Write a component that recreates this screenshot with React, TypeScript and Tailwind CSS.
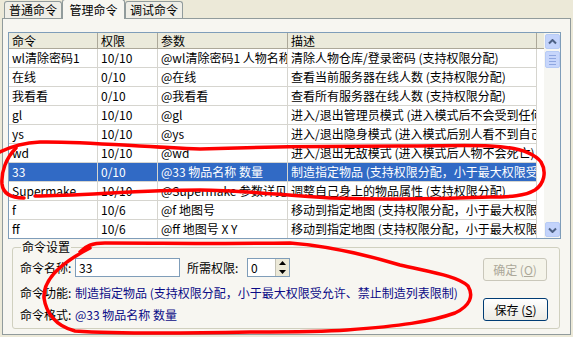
import { ReactNode } from "react";

interface Row {
  name: string;
  level: string;
  args: string;
  desc: string;
  selected?: boolean;
}

const rows: Row[] = [
  { name: "wl清除密码1", level: "10/10", args: "@wl清除密码1 人物名称", desc: "清除人物仓库/登录密码 (支持权限分配)" },
  { name: "在线", level: "0/10", args: "@在线", desc: "查看当前服务器在线人数 (支持权限分配)" },
  { name: "我看看", level: "0/10", args: "@我看看", desc: "查看所有服务器在线人数 (支持权限分配)" },
  { name: "gl", level: "10/10", args: "@gl", desc: "进入/退出管理员模式 (进入模式后不会受到任何攻击)" },
  { name: "ys", level: "10/10", args: "@ys", desc: "进入/退出隐身模式 (进入模式后别人看不到自己)" },
  { name: "wd", level: "10/10", args: "@wd", desc: "进入/退出无敌模式 (进入模式后人物不会死亡)" },
  { name: "33", level: "0/10", args: "@33 物品名称 数量", desc: "制造指定物品 (支持权限分配，小于最大权限受允许)", selected: true },
  { name: "Supermake", level: "10/10", args: "@Supermake 参数详见使用说明", desc: "调整自己身上的物品属性 (支持权限分配)" },
  { name: "f", level: "10/6", args: "@f 地图号", desc: "移动到指定地图 (支持权限分配，小于最大权限受允许)" },
  { name: "ff", level: "10/6", args: "@ff 地图号 X Y", desc: "移动到指定地图 (支持权限分配，小于最大权限受允许)" },
];

const cols = ["w-[89px]", "w-[60px]", "w-[130px]", "w-[249px]"];

function Tab({ label, active }: { label: string; active?: boolean }) {
  return (
    <div
      className={
        active
          ? "relative z-10 -mb-px flex h-[20px] w-[63px] items-center justify-center rounded-t-[3px] border border-b-0 border-[#919b9c] bg-[#f7f6f1]"
          : "flex h-[17px] w-[58px] items-center justify-center rounded-t-[3px] border border-b-0 border-[#919b9c] bg-[#efeee7]"
      }
    >
      {label}
    </div>
  );
}

function ScrollBtn({ down }: { down?: boolean }) {
  return (
    <div className="flex h-[15px] w-[15px] items-center justify-center rounded-[2px] border border-[#b7cbf5] bg-[#c3d3fb]">
      <svg width="9" height="6" viewBox="0 0 9 6">
        <path
          d={down ? "M1 1.5 L4.5 5 L8 1.5" : "M1 4.5 L4.5 1 L8 4.5"}
          fill="none"
          stroke="#4d6185"
          strokeWidth="2"
        />
      </svg>
    </div>
  );
}

function XpButton({ children, disabled }: { children: ReactNode; disabled?: boolean }) {
  return (
    <div
      className={
        disabled
          ? "flex h-[23px] w-[64px] items-center justify-center rounded-[3px] border border-[#c9c7ba] bg-[#f5f4ea] text-[#aca899]"
          : "flex h-[23px] w-[65px] items-center justify-center rounded-[3px] border border-[#003c74] bg-gradient-to-b from-white to-[#ecebe4] text-black"
      }
    >
      {children}
    </div>
  );
}

export default function App() {
  return (
    <div className="relative h-[337px] w-[573px] overflow-hidden bg-[#ece9d8] font-['Noto_Sans_CJK_SC',sans-serif] text-[12px] leading-none text-black">
      {/* tabs */}
      <div className="flex h-[18px] items-end pl-[4px]">
        <Tab label="普通命令" />
        <Tab label="管理命令" active />
        <Tab label="调试命令" />
      </div>

      {/* tab page */}
      <div className="mx-[2px] h-[317px] border border-[#919b9c] bg-[#f7f6f1] pl-[5px] pt-[13px]">
        {/* list view */}
        <div className="flex h-[207px] w-[553px] border border-[#7f9db9] bg-white">
          <div className="flex-1 overflow-hidden">
            <div className="flex h-[16px] bg-[#ebeadb]">
              {["命令", "权限", "参数", "描述"].map((h, i) => (
                <div
                  key={h}
                  className={`${cols[i]} flex shrink-0 items-center border-r border-b border-[#aca899] pl-[3px]`}
                >
                  {h}
                </div>
              ))}
              <div className="flex-1 border-b border-[#aca899]" />
            </div>
            {rows.map((r) => (
              <div key={r.name} className="flex h-[19px]">
                {[r.name, r.level, r.args, r.desc].map((c, i) => (
                  <div
                    key={i}
                    className={`${cols[i]} flex shrink-0 items-center overflow-hidden whitespace-nowrap border-r border-b border-[#d6d5cf] pl-[3px] ${
                      r.selected ? "bg-[#316ac5] text-white" : ""
                    }`}
                  >
                    {c}
                  </div>
                ))}
              </div>
            ))}
          </div>
          {/* scrollbar */}
          <div className="flex w-[16px] flex-col items-center justify-between bg-[#f6f6f2] py-px">
            <div className="flex flex-col items-center gap-[2px]">
              <ScrollBtn />
              <div className="flex h-[17px] w-[15px] flex-col items-center justify-center gap-[2px] rounded-[2px] border border-[#b7cbf5] bg-[#c7d6fb]">
                <div className="h-px w-[7px] bg-[#8ea6e0]" />
                <div className="h-px w-[7px] bg-[#8ea6e0]" />
                <div className="h-px w-[7px] bg-[#8ea6e0]" />
                <div className="h-px w-[7px] bg-[#8ea6e0]" />
              </div>
            </div>
            <ScrollBtn down />
          </div>
        </div>

        {/* settings group */}
        <fieldset className="ml-[4px] mt-[2px] h-[88px] w-[548px] rounded-[3px] border border-[#d0d0bf] px-[7px] pr-[11px]">
          <legend className="ml-[1px] px-[1px]">命令设置</legend>
          <div className="flex justify-between">
            <div className="flex flex-col pt-[5px]">
              <div className="flex h-[19px] items-center">
                <span className="w-[55px]">命令名称:</span>
                <div className="flex h-[19px] w-[105px] items-center border border-[#7f9db9] bg-white pl-[3px]">33</div>
                <span className="ml-[7px] w-[60px]">所需权限:</span>
                <div className="flex h-[19px] w-[43px] items-center border border-[#7f9db9] bg-white pl-[3px]">
                  <span className="flex-1">0</span>
                  <div className="flex h-[17px] w-[14px] flex-col border-l border-[#c4c2b5] bg-[#ece9d8]">
                    <div className="flex flex-1 items-center justify-center">
                      <svg width="7" height="4" viewBox="0 0 7 4">
                        <path d="M0 4 L3.5 0 L7 4 Z" fill="#000" />
                      </svg>
                    </div>
                    <div className="flex flex-1 items-center justify-center">
                      <svg width="7" height="4" viewBox="0 0 7 4">
                        <path d="M0 0 L3.5 4 L7 0 Z" fill="#000" />
                      </svg>
                    </div>
                  </div>
                </div>
              </div>
              <div className="mt-[10px] flex h-[12px] items-center">
                <span className="w-[55px]">命令功能:</span>
                <span className="whitespace-nowrap text-[#0b0b86]">
                  制造指定物品 (支持权限分配，小于最大权限受允许、禁止制造列表限制)
                </span>
              </div>
              <div className="mt-[10px] flex h-[12px] items-center">
                <span className="w-[55px]">命令格式:</span>
                <span className="whitespace-nowrap text-[#0b0b86]">@33 物品名称 数量</span>
              </div>
            </div>
            <div className="flex flex-col gap-[17px] pt-[5px]">
              <XpButton disabled>
                确定 (<span className="underline">O</span>)
              </XpButton>
              <XpButton>
                保存 (<span className="underline">S</span>)
              </XpButton>
            </div>
          </div>
        </fieldset>
      </div>

      {/* red marker annotations drawn over the screenshot */}
      <svg
        className="pointer-events-none absolute left-0 top-0"
        width="573"
        height="337"
        viewBox="0 0 573 337"
      >
        <g fill="none" stroke="#ff0000" strokeWidth="3.5" strokeLinecap="round" strokeLinejoin="round">
          <path d="M0 152 C10 147 22 143 40 142 C80 141 140 147 200 149 C260 147 330 146 400 146 C440 146 470 145 490 146 C515 147 533 152 541 162 C547 172 544 184 535 190 C525 196 510 197 490 197 C440 199 400 200 330 198 C280 195 240 190 200 190 C140 190 80 196 35 196" />
          <path d="M16 148 C6 158 1 172 2 184 C3 193 10 198 24 198" />
          <path d="M80 252 C86 246 92 243 105 243 C160 243 230 244 290 243 C330 246 370 256 400 265 C430 272 458 276 468 286 C474 296 470 306 455 313 C430 322 400 326 347 330 C320 332 300 332 250 332 C200 333 120 334 75 331 C55 326 46 312 44 298 C43 282 55 266 90 248" />
        </g>
      </svg>
    </div>
  );
}
